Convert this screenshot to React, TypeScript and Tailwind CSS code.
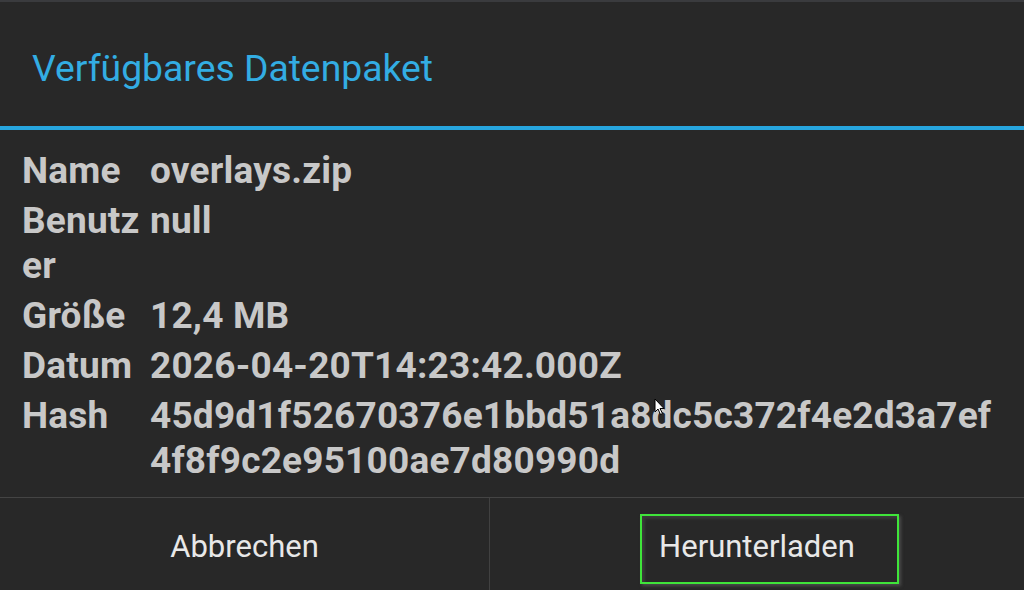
import React from "react";

const rows: { label: string; value: string }[] = [
  { label: "Name", value: "overlays.zip" },
  { label: "Benutzer", value: "null" },
  { label: "Größe", value: "12,4 MB" },
  { label: "Datum", value: "2026-04-20T14:23:42.000Z" },
  { label: "Hash", value: "45d9d1f52670376e1bbd51a8dc5c372f4e2d3a7ef4f8f9c2e95100ae7d80990d" },
];

export default function App() {
  return (
    <div
      className="relative flex h-[590px] w-[1024px] flex-col overflow-hidden bg-[#282828]"
      style={{ fontFamily: "Roboto, 'Noto Sans', Arial, sans-serif" }}
    >
      {/* header */}
      <div className="h-[2px] bg-[#3a3b3e]" />
      <div className="h-[124px] pl-[32px] pt-[47px]">
        <h1 className="text-[37.3px] leading-[38px] font-normal text-[#33ade3]">
          Verfügbares Datenpaket
        </h1>
      </div>
      <div className="h-[4px] bg-[#27a6df]" />

      {/* content */}
      <div className="flex-1 pl-[22px] pr-[22px] pt-[18px]">
        {rows.map((r) => (
          <div key={r.label} className="flex pb-[5px] text-[37px] leading-[45px] font-bold tracking-[0.2px] text-[#c8c8c8]">
            <div className="w-[128px] shrink-0 pr-[8px] break-all">{r.label}</div>
            <div className="min-w-0 flex-1 break-all">{r.value}</div>
          </div>
        ))}
      </div>

      {/* buttons */}
      <div className="h-[1px] bg-[#444444]" />
      <div className="flex h-[92px]">
        <div className="flex w-[489px] items-center justify-center pt-[6px] text-[31px] leading-[36px] text-[#e8e8e8]">
          Abbrechen
        </div>
        <div className="w-[1px] bg-[#414141]" />
        <div className="relative flex flex-1 items-center justify-center pt-[6px] text-[31px] leading-[36px] text-[#e8e8e8]">
          <span className="absolute left-[150px] top-[16px] h-[70px] w-[259px] border-2 border-[#3fe43a] shadow-[2px_2px_3px_rgba(90,90,90,0.7),inset_3px_3px_3px_rgba(70,70,70,0.6)]" />
          <span className="relative">Herunterladen</span>
        </div>
      </div>

      {/* mouse cursor */}
      <svg className="absolute left-[654px] top-[398px]" width="12" height="18" viewBox="0 0 12 18">
        <path d="M1 1 L1 14 L4 11 L6.5 16.5 L8.5 15.5 L6 10.5 L10 10.5 Z" fill="#ffffff" stroke="#000000" strokeWidth="1" />
      </svg>
    </div>
  );
}
